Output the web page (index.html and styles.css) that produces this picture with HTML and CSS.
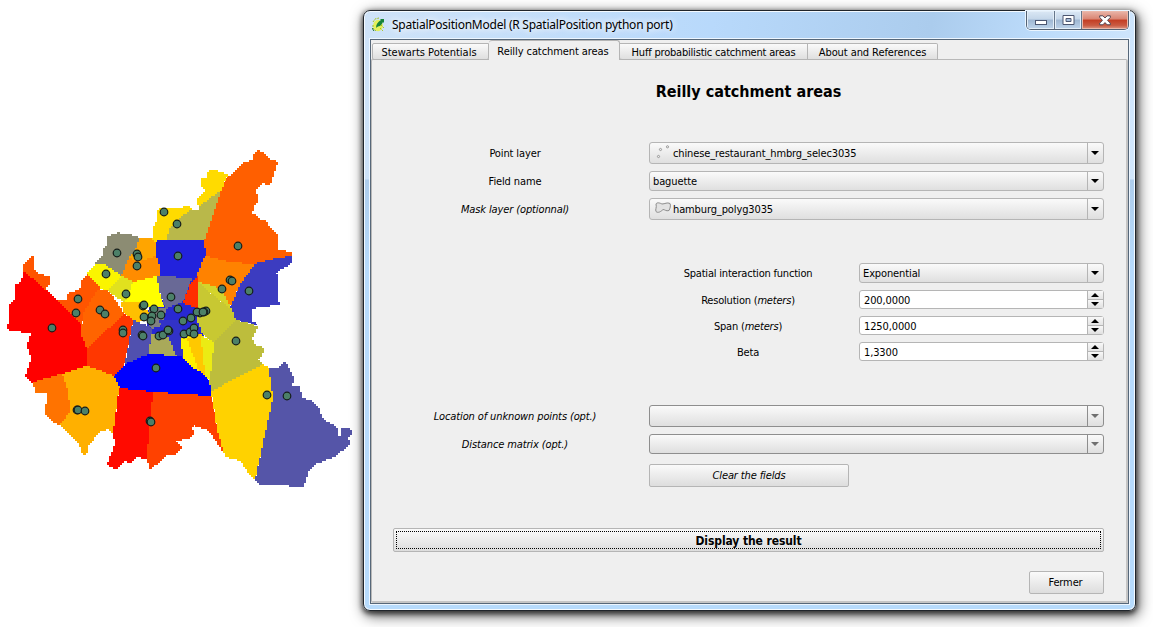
FILE: index.html
```html
<!DOCTYPE html>
<html lang="en">
<head>
<meta charset="utf-8">
<title>SpatialPositionModel</title>
<link rel="stylesheet" href="styles.css">
</head>
<body>
<svg class="map" width="355" height="627" viewBox="0 0 355 627"><g id="areas" transform="translate(-1 0)"></g><g id="points"></g></svg>
<main class="window">
  <header class="titlebar">
    <svg class="logo" width="14" height="16" viewBox="0 0 14 16"><ellipse cx="6" cy="8.500" rx="4.800" ry="5.800" fill="#e4f05a"/><path d="M1 5l2-3 4-1M1 8v3l3 3M9 8l3 3M8 11l3 3" stroke="#a5c020" fill="none" stroke-dasharray="2 1"/><path d="M4 11c0-4 2-6 5-8l-1-1h4v4l-1-1c-1 2-2 3-3 4-2 0-3 1-4 2z" fill="#17843a"/><path d="M0 11l2 3" stroke="#176b2a"/></svg>
    <span class="caption">SpatialPositionModel (R SpatialPosition python port)</span>
    <div class="controls">
      <span class="ctl min"><svg width="12" height="6"><rect x=".5" y=".5" width="11" height="4" fill="#fff" stroke="#4c5670"/></svg></span>
      <span class="ctl max"><svg width="13" height="11"><path d="M1 .5h11v9H1z" fill="#fff" stroke="#4c5670"/><path d="M4 3.500h5v3H4z" fill="#a7bfdb" stroke="#4c5670"/></svg></span>
      <span class="ctl close"><svg width="12" height="11" viewBox="0 0 12 11"><path d="M.7.8h3.2L6 3 8.100.8h3.200v1.700L8.500 5.300l2.800 2.800v1.700H8.100L6 7.600 3.900 9.800H.7V8.100l2.800-2.800L.7 2.500z" fill="#fff" stroke="#50434f"/></svg></span>
    </div>
  </header>
  <section class="client">
    <nav class="tabs">
      <span class="tab t1">Stewarts Potentials</span>
      <span class="tab t2 selected">Reilly catchment areas</span>
      <span class="tab t3">Huff probabilistic catchment areas</span>
      <span class="tab t4">About and References</span>
    </nav>
    <div class="pane">
      <h1>Reilly catchment areas</h1>
      <div class="row r1"><label>Point layer</label><div class="combo"><svg class="ico" width="19" height="16"><g fill="#eee" stroke="#888" stroke-width=".8"><circle cx="5.500" cy="11.500" r="1.100"/><circle cx="7.500" cy="4.500" r="1.100"/><circle cx="14.500" cy="1.800" r="1.100"/></g></svg><span>chinese_restaurant_hmbrg_selec3035</span><i class="drop"></i></div></div>
      <div class="row r2"><label>Field name</label><div class="combo low"><span>baguette</span><i class="drop"></i></div></div>
      <div class="row r3"><label><em>Mask layer (optionnal)</em></label><div class="combo"><svg class="ico" width="19" height="16"><path d="M3 3c1-2 4-1 6 0 3 0 5-2 8-.5 1 2 0 5-1 7-3 1-4-1-6-1-2 2-5 4-7 2-1-2 1-4 0-7.500z" fill="#e2e2e2" stroke="#8b8b8b"/></svg><span>hamburg_polyg3035</span><i class="drop"></i></div></div>
      <div class="row sub r4"><label>Spatial interaction function</label><div class="combo low"><span>Exponential</span><i class="drop"></i></div></div>
      <div class="row sub r5"><label>Resolution (<em>meters</em>)</label><div class="spin"><span>200,0000</span><i class="step"></i></div></div>
      <div class="row sub r6"><label>Span (<em>meters</em>)</label><div class="spin"><span>1250,0000</span><i class="step"></i></div></div>
      <div class="row sub r7"><label>Beta</label><div class="spin"><span>1,3300</span><i class="step"></i></div></div>
      <div class="row r8"><label><em>Location of unknown points (opt.)</em></label><div class="combo off"><i class="drop"></i></div></div>
      <div class="row r9"><label><em>Distance matrix (opt.)</em></label><div class="combo low off"><i class="drop"></i></div></div>
      <button class="clear"><em>Clear the fields</em></button>
      <button class="display"><span>Display the result</span></button>
      <button class="fermer">Fermer</button>
    </div>
  </section>
</main>
<script src="map.js"></script>
</body>
</html>
```
FILE: styles.css
```css
* { box-sizing: border-box; }
body { margin: 0; width: 1153px; height: 627px; overflow: hidden; background: #fff; display: flex; font: 11px/14px "DejaVu Sans Condensed", "DejaVu Sans", sans-serif; font-stretch: condensed; color: #000; letter-spacing: -.12px; }
.map { flex: none; display: block; }
.window { flex: none; width: 773px; height: 601px; margin: 10px 0 0 8px; border: 1px solid #20252b; border-radius: 7px; padding: 0 6px 6px; display: flex; flex-direction: column;
  background: linear-gradient(#e8f3fd00 0 140px, #e8f3fd00 168px, #aecdec 169px, #b7dbfc 260px), linear-gradient(100deg, #cfe3f8, #b8d9fb 40%, #abcced 65%, #bddcfb 78%, #e1effd);
  box-shadow: inset 0 0 0 1px #f4faff, 0 2px 5px 1px rgba(0,0,0,.6), 2px 4px 14px 1px rgba(0,0,0,.62); }
.titlebar { height: 28px; flex: none; display: flex; position: relative; }
.logo { margin: 6px 0 0 2px; }
.caption { font-family: "Noto Sans", sans-serif; font-stretch: normal; font-size: 12px; line-height: 15px; margin: 6px 0 0 6px; letter-spacing: -.24px; white-space: nowrap; text-shadow: 0 0 6px #fff, 0 0 8px #fff; }
.controls { margin: 0 0 0 auto; display: flex; height: 19px; border: 1px solid #536173; border-top: 0; border-radius: 0 0 5px 5px; overflow: hidden; box-shadow: 0 0 0 1px #eaf5ff; }
.ctl { display: flex; align-items: center; justify-content: center; border-right: 1px solid #66778b; background: linear-gradient(#dbe8f5, #c4d6e9 45%, #9fb7d2 50%, #bed4eb); box-shadow: inset 0 0 0 1px #e3eef8; }
.min { width: 28px; padding-top: 5px; } .max { width: 27px; }
.close { width: 46px; border: 0; background: linear-gradient(#eab6aa, #d98472 45%, #c33d23 50%, #ca5b43 80%, #dc9987); box-shadow: inset 0 0 0 1px #eab8aa; }
.client { flex: 1; border: 1px solid #566779; background: #efefef; box-shadow: 0 0 0 1px #edf6ff; display: flex; flex-direction: column; }
.tabs { height: 20px; flex: none; display: flex; align-items: flex-end; position: relative; z-index: 1; padding-left: 1px; margin-bottom: -1px; }
.tab { height: 17px; border: 1px solid #b5b5b5; border-left-width: 0; background: linear-gradient(#fafafa, #dfdfdf); text-align: center; line-height: 17px; white-space: nowrap; letter-spacing: 0; }
.t1 { width: 117px; border-left-width: 1px; border-radius: 2px 0 2px 2px; padding-right: 3px; }
.t2 { width: 131px; height: 20px; background: #efefef; border-width: 1px 1px 0 0; border-radius: 3px 3px 0 0; line-height: 21px; padding-right: 2px; letter-spacing: -.08px; }
.t3 { width: 188px; border-radius: 0 0 0 3px; letter-spacing: -.2px; } .t4 { width: 130px; border-radius: 0 2px 0 0; letter-spacing: -.08px; }
.pane { flex: 1; border: 1px solid #b5b5b5; border-width: 1px 2px 2px 1px; border-color: #b8b8b8 #c5c5c5 #c5c5c5 #b8b8b8; border-radius: 2px; padding: 0 22px 0 21px; display: flex; flex-direction: column; }
h1 { margin: 22px 0 0; height: 19px; font: bold 16px/20px "DejaVu Sans Condensed", "DejaVu Sans", sans-serif; font-stretch: condensed; letter-spacing: 0; text-align: center; }
.row { display: flex; align-items: center; flex: none; }
.row label { width: 244px; margin-right: 12px; text-align: center; white-space: nowrap; padding-top: 2px; }
.row.sub { padding-left: 256px; } .row.sub label { width: 198px; letter-spacing: -.2px; }
.r1 { margin-top: 41px; } .r2 { margin-top: 7px; } .r3 { margin-top: 7px; } .r4 { margin-top: 43px; }
.r5, .r6, .r7 { margin-top: 7px; } .r8 { margin-top: 44px; } .r9 { margin-top: 7px; }
.combo { flex: 1; height: 22px; border: 1px solid #b5b5b5; border-radius: 3px; background: linear-gradient(#fafafa, #dfdfdf); display: flex; align-items: center; padding-left: 3px; }
.combo span, .spin span { padding-top: 2px; }
.low { height: 20px; } .off { border-color: #8e8e8e; }
.ico { margin: 0 1px 0 0; }
.drop { margin-left: auto; width: 16px; height: 100%; border-left: 1px solid #b5b5b5; display: flex; align-items: center; justify-content: center; }
.off .drop { border-color: #8e8e8e; }
.drop::before { content: ""; border: solid transparent; border-width: 4px 4px 0; border-top-color: #000; margin-right: 1px; }
.off .drop::before { border-top-color: #707070; }
.spin { flex: 1; height: 19px; border: 1px solid #b5b5b5; border-radius: 3px; background: #fff; display: flex; align-items: center; padding-left: 4px; }
.step { margin-left: auto; width: 16px; height: 17px; border-left: 1px solid #b5b5b5; background: linear-gradient(#f8f8f8, #e4e4e4 8px, #b5b5b5 8px 9px, #f8f8f8 9px, #e0e0e0); display: flex; flex-direction: column; align-items: center; justify-content: space-between; padding: 2px 1px 2px 0; }
.step::before, .step::after { content: ""; border: solid transparent; }
.step::before { border-width: 0 4px 4px; border-bottom-color: #000; }
.step::after { border-width: 4px 4px 0; border-top-color: #000; }
button { font: inherit; letter-spacing: inherit; color: #000; border: 1px solid #b5b5b5; border-radius: 2px; background: linear-gradient(#fafafa, #dddddd); padding: 0; flex: none; }
.clear { width: 200px; height: 23px; margin: 10px 0 0 256px; }
.display { height: 24px; margin-top: 41px; font-weight: bold; font-size: 12px; padding: 2px; letter-spacing: -.1px; }
.display span { display: block; height: 18px; line-height: 18px; border: 1px dotted #000; }
.fermer { width: 75px; height: 23px; margin: 19px 0 0 auto; padding-top: 1px; padding-right: 2px; }
```
FILE: map.js
```js
// Each area: fill colour, then x,y vertices of its boundary.
const areas = [
["#2828d2","150,300 184,300 190,276 200,274 206,320 203,336 190,345 184,360 150,356 148,318"],
["#ff5f00","254,153 258,150 266,154 268,157 277,161 274,171 272,178 269,183 261,181 256,188 257,200 253,206 251,211 247,211 253,214 260,219 265,220 270,227 278,233 278,250 291,252 292,255 277,258 253,264 230,261 206,256 204,240 212,215 220,192 227,176 233,173 238,167 246,162 253,159"],
["#ffdb00","207,172 210,169 216,170 218,172 228,174 220,192 200,205 197,204 197,200 201,193 206,189 202,186 202,178 207,177"],
["#ffdb00","160,207 180,207 185,205 192,208 180,220 172,226 167,240 158,244 153,243 149,238 153,238 154,227 157,220 157,209"],
["#b9b84a","220,192 200,205 200,209 192,209 180,218 170,228 167,240 204,240 212,215"],
["#2222dd","158,240 204,240 206,256 197,273 191,278 158,275 159,267 155,255 155,244"],
["#8c8c73","108,235 115,233 118,231 122,234 127,234 139,237 135,250 127,263 121,275 103,264 96,263 103,253 103,248 107,245"],
["#ffa500","139,237 149,237 155,243 155,256 140,261 130,258 135,250"],
["#ff8c00","155,255 159,267 160,277 143,280 133,282 121,275 130,258 140,261"],
["#faf500","96,263 103,264 121,275 108,289 100,287 88,273"],
["#e1e11e","121,275 133,282 125,302 108,289"],
["#ffff00","133,282 158,276 160,290 164,306 142,306 125,302"],
["#ffc000","122,302 138,302 148,309 151,318 136,322 123,312"],
["#696996","158,276 191,278 184,300 165,307 160,290"],
["#808080","151,308 166,308 162,324 151,328 145,318"],
["#ff5500","88,273 100,287 98,290 83,313 82,325 72,315 58,308 23,272 23,264 30,257 34,256 33,268 38,273 49,275 49,283 43,287 58,299 67,299 68,293 81,287 82,280"],
["#ff0000","23,272 31,278 45,290 60,304 72,315 82,325 82,333 88,348 87,365 62,374 34,382 26,375 32,358 28,343 32,332 10,330 8,327 9,320 9,303 15,297 15,284 22,282"],
["#ff6400","98,290 108,289 118,303 123,313 110,327 88,348 82,333 83,313"],
["#ff3700","88,348 110,327 123,313 133,320 128,347 123,365 113,375 87,365"],
["#5050af","133,320 152,328 150,353 125,364"],
["#a9a95a","152,334 167,333 178,355 150,353"],
["#3232c8","160,320 180,319 182,338 183,358 178,355 167,333"],
["#0000ff","150,353 178,355 183,358 195,367 205,373 212,385 212,396 185,395 170,393 140,391 120,388 113,375 125,364"],
["#ffb000","62,374 87,365 113,375 119,387 117,400 113,433 109,428 100,430 87,445 87,449 83,453 80,443 60,424 70,410 67,390"],
["#ff7300","62,374 34,382 36,391 47,391 46,413 52,420 60,424 70,410 67,390"],
["#ff0a00","119,388 153,392 149,427 147,458 135,455 130,461 123,460 115,467 108,463 115,443 113,433"],
["#ff4100","153,392 212,396 218,430 225,454 218,442 210,430 193,423 190,427 193,432 187,437 174,439 181,445 175,453 168,453 156,463 149,468 147,458 149,427"],
["#ffd200","212,390 230,380 262,363 270,368 273,397 265,433 256,478 250,473 242,459 225,456 218,427"],
["#5555a8","270,368 278,368 285,362 290,369 293,377 292,386 300,385 301,397 309,399 317,405 322,417 337,428 337,436 341,436 341,428 348,427 352,432 347,437 350,444 333,455 313,463 308,472 303,485 290,485 287,483 260,483 256,479 265,433 273,397"],
["#3c3cc0","253,264 277,258 292,255 291,262 276,272 278,277 278,300 279,304 258,306 252,308 252,321 258,324 235,320 230,307 240,284"],
["#ff8200","206,256 230,261 253,264 240,284 230,305 225,297 197,282 197,273"],
["#d4d42b","197,282 220,288 225,297 230,305 232,310"],
["#c8c832","197,282 212,293 232,310 235,320 224,332 213,343 203,334 198,320"],
["#ff2d00","197,275 198,307 183,302 191,281"],
["#bdbd3c","235,320 258,325 252,337 253,343 263,347 263,350 258,360 262,363 230,380 212,390 210,377 213,343"],
["#fff000","182,338 191,336 203,372 195,367 183,357"],
["#ffc800","188,337 202,333 207,375 200,370"],
["#ebeb14","202,335 213,342 210,380 205,373"]
];
const CELL = 2;
const snap = v => Math.round(v / CELL) * CELL;
const NS = "http://www.w3.org/2000/svg";
function stairs(text) {
  const pts = text.split(" ").map(p => p.split(",").map(n => snap(+n)));
  let d = "M" + pts[0];
  pts.forEach(([x0, y0], i) => {
    const [x1, y1] = pts[(i + 1) % pts.length];
    const dir = Math.sign(y1 - y0);
    for (let y = y0; y !== y1; y += dir * CELL) {
      const mid = y + dir * CELL / 2;
      d += "H" + snap(x0 + (x1 - x0) * (mid - y0) / (y1 - y0)) + "V" + (y + dir * CELL);
    }
    d += "H" + x1;
  });
  return d + "Z";
}
for (const [fill, pts] of areas) {
  const p = document.createElementNS(NS, "path");
  p.setAttribute("d", stairs(pts));
  p.setAttribute("fill", fill);
  p.setAttribute("stroke", fill);
  p.setAttribute("shape-rendering", "crispEdges");
  document.getElementById("areas").append(p);
}
const points = "164,212 177,224 178,256 238,246 117,253 137,254 138,257 137,266 106,274 126,294 78,299 76,313 100,310 105,314 52,328 123,330 123,333 143,306 144,305 154,309 144,317 152,316 151,321 161,315 171,297 178,309 183,321 191,318 206,311 204,312 200,313 197,312 203,312 142,335 143,336 159,336 163,335 169,331 168,330 184,334 190,332 194,328 194,334 230,280 232,281 222,289 249,291 236,341 267,395 287,396 156,368 77,410 78,410 85,411 150,421 151,422";
for (const p of points.split(" ")) {
  const [x, y] = p.split(",");
  const c = document.createElementNS(NS, "circle");
  c.setAttribute("cx", x);
  c.setAttribute("cy", y);
  c.setAttribute("r", 3.8);
  c.setAttribute("fill", "#4c8068");
  c.setAttribute("stroke", "#151d1a");
  c.setAttribute("stroke-width", 1.2);
  document.getElementById("points").append(c);
}
```
